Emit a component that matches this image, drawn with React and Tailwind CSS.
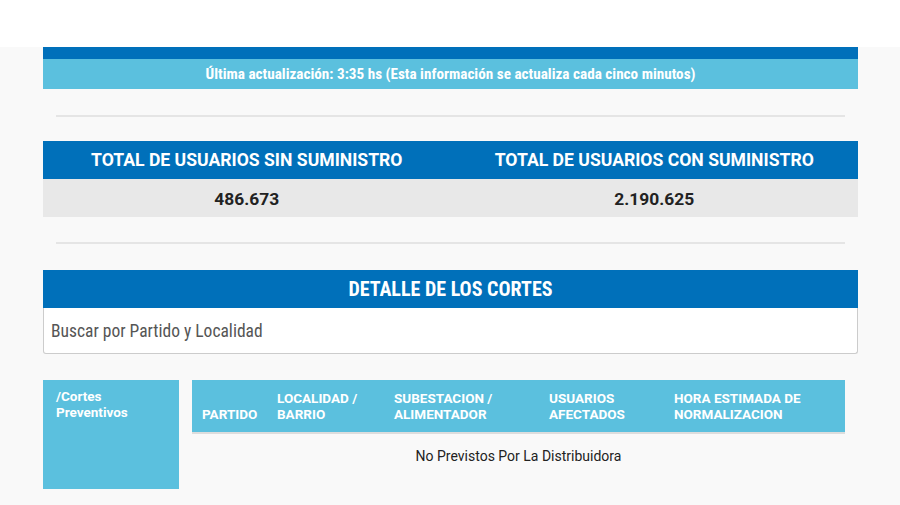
export default function App() {
  const cond = "font-['Roboto_Condensed','Liberation_Sans_Narrow','DejaVu_Sans_Condensed',sans-serif]";

  return (
    <div className="w-[900px] h-[505px] overflow-hidden bg-[#f9f9f9] font-['Roboto','Liberation_Sans',sans-serif]">
      {/* top white band */}
      <div className="h-[47px] bg-white"></div>

      <div className="px-[43px] w-[901px]">
        <div className="h-[12px] bg-[#0070ba]"></div>
        <div className={`h-[30px] bg-[#5bc0de] flex items-center justify-center text-white text-[15.2px] font-bold ${cond}`}>
          Última actualización: 3:35 hs (Esta información se actualiza cada cinco minutos)
        </div>

        <div className="mx-[13px] mt-[26px] border-t-2 border-[#e5e5e5]"></div>

        {/* totals */}
        <div className="mt-[24px] grid grid-cols-2">
          <div className="h-[38px] bg-[#0070ba] text-white font-bold text-[17.6px] flex items-center justify-center">
            TOTAL DE USUARIOS SIN SUMINISTRO
          </div>
          <div className="h-[38px] bg-[#0070ba] text-white font-bold text-[17.6px] flex items-center justify-center">
            TOTAL DE USUARIOS CON SUMINISTRO
          </div>
          <div className="h-[38px] bg-[#e8e8e8] text-[#222] font-bold text-[17.4px] flex items-center justify-center pt-[2px]">
            486.673
          </div>
          <div className="h-[38px] bg-[#e8e8e8] text-[#222] font-bold text-[17.4px] flex items-center justify-center pt-[2px]">
            2.190.625
          </div>
        </div>

        <div className="mx-[13px] mt-[25px] border-t-2 border-[#e5e5e5]"></div>

        {/* detalle */}
        <div className={`mt-[26px] h-[38px] bg-[#0070ba] text-white text-[20px] font-bold flex items-center justify-center ${cond}`}>
          DETALLE DE LOS CORTES
        </div>
        <div className="h-[46px] bg-white border border-t-0 border-[#cccccc] rounded-b-[3px] flex items-center px-[7px] pt-[2px]">
          <span className={`text-[17.5px] text-[#555] ${cond}`}>Buscar por Partido y Localidad</span>
        </div>

        {/* bottom row */}
        <div className="mt-[26px] flex gap-[13px]">
          <div className="w-[136px] h-[109px] bg-[#5bc0de] text-white font-bold text-[13.5px] leading-[16px] px-[13px] pt-[8px]">
            /Cortes
            <br />
            Preventivos
          </div>
          <div className="w-[653px]">
            <div className="h-[54px] bg-[#5bc0de] text-white font-bold text-[13.5px] leading-[16px] flex items-end pb-[10px] border-b-2 border-[#dddddd]">
              <div className="w-[85px] pl-[10px]">PARTIDO</div>
              <div className="w-[117px]">LOCALIDAD /<br />BARRIO</div>
              <div className="w-[155px]">SUBESTACION /<br />ALIMENTADOR</div>
              <div className="w-[125px]">USUARIOS<br />AFECTADOS</div>
              <div>HORA ESTIMADA DE<br />NORMALIZACION</div>
            </div>
            <div className="text-center text-[14px] text-[#222] pt-[12px]">
              No Previstos Por La Distribuidora
            </div>
          </div>
        </div>
      </div>
    </div>
  );
}
